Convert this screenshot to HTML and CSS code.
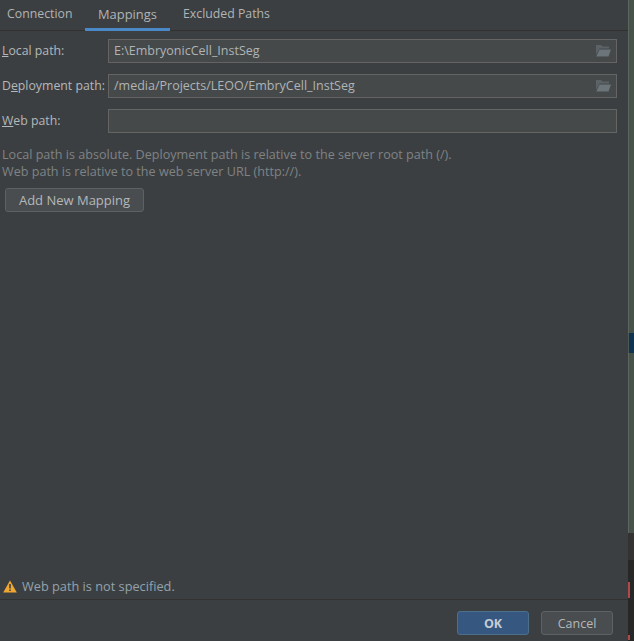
FILE: index.html
```html
<!DOCTYPE html>
<html lang="en">
<head>
<meta charset="utf-8">
<title>Mappings</title>
<link rel="stylesheet" href="styles.css">
</head>
<body>
<div class="shell">
  <div class="dialog">
    <nav class="tabs">
      <span class="tab">Connection</span>
      <span class="tab active">Mappings</span>
      <span class="tab">Excluded Paths</span>
    </nav>
    <main class="panel">
      <div class="form">
        <label class="label"><u>L</u>ocal path:</label>
        <div class="field"><span class="value">E:\EmbryonicCell_InstSeg</span>
          <svg class="folder" viewBox="0 0 15 12"><path d="M0 0h5l1.500 1.500H13v2H3.500L0 10z" fill="#5b6366"/><path d="M3.500 4.500H15l-2.500 7H0.300z" fill="#6b757a"/></svg>
        </div>
        <label class="label">D<u>e</u>ployment path:</label>
        <div class="field"><span class="value">/media/Projects/LEOO/EmbryCell_InstSeg</span>
          <svg class="folder" viewBox="0 0 15 12"><path d="M0 0h5l1.500 1.500H13v2H3.500L0 10z" fill="#5b6366"/><path d="M3.500 4.500H15l-2.500 7H0.300z" fill="#6b757a"/></svg>
        </div>
        <label class="label"><u>W</u>eb path:</label>
        <div class="field"></div>
      </div>
      <p class="hint">Local path is absolute. Deployment path is relative to the server root path (/).<br>Web path is relative to the web server URL (http://).</p>
      <button class="btn add">Add New Mapping</button>
    </main>
    <div class="status">
      <svg class="warn" viewBox="0 0 14 13"><path d="M7 0.500 L13.800 12.500 H0.200 Z" fill="#f0a732"/><path d="M6.200 4h1.600v4.500H6.200zM6.200 9.500h1.600v1.600H6.200z" fill="#3c3f41"/></svg>
      <span>Web path is not specified.</span>
    </div>
    <footer class="footer">
      <button class="btn ok">OK</button>
      <button class="btn cancel">Cancel</button>
    </footer>
  </div>
  <div class="edge">
    <div class="edge-a"></div>
    <div class="edge-b"></div>
    <div class="edge-c"></div>
    <div class="edge-d"></div>
    <div class="edge-e">
      <div class="mark mark-a"></div>
      <div class="mark mark-b"></div>
    </div>
  </div>
</div>
</body>
</html>
```
FILE: styles.css
```css
* { box-sizing: border-box; }
html, body { margin: 0; height: 100%; }
body { background: #3c3f41; font-family: "Open Sans", "Liberation Sans", sans-serif; font-size: 12.500px; color: #b4b8ba; overflow: hidden; }
.shell { display: flex; width: 634px; height: 641px; }
.dialog { width: 628px; display: flex; flex-direction: column; background: #3c3f41; }
.tabs { display: flex; height: 31px; border-bottom: 1px solid #323232; }
.tab { padding: 6px 13px 0; height: 31px; line-height: 16px; color: #b0b4b6; font-size: 12.300px; }
.tab:first-child { padding: 6px 13px 0 7px; width: 85px; }
.tab.active { border-bottom: 3px solid #4a88c7; width: 85px; font-size: 12.900px; }
.panel { flex: 1; padding: 8px 11px 0 2px; display: flex; flex-direction: column; align-items: flex-start; }
.form { display: grid; grid-template-columns: 106px 1fr; row-gap: 11px; width: 100%; }
.label { align-self: center; line-height: 16px; white-space: nowrap; color: #b4b8ba; font-size: 12.300px; }
.field { height: 24px; background: #45494a; border: 1px solid #646464; display: flex; align-items: center; justify-content: space-between; padding: 0 5px; color: #b0b4b6; }
.value { padding-bottom: 2px; }
.folder { width: 15px; height: 12px; }
.hint { margin: 13px 0 0; line-height: 17px; color: #7f8386; font-size: 12.600px; }
.btn { font: inherit; height: 24px; border-radius: 3px; border: 1px solid #5e6162; background: #4a4d4f; color: #b4b8ba; padding: 0; }
.add { width: 139px; margin: 8px 0 0 3px; font-size: 13px; }
.status { height: 23px; display: flex; align-items: center; gap: 5px; padding: 0 0 3px 3px; color: #93a3ad; font-size: 12.750px; }
.warn { width: 14px; height: 13px; }
.footer { height: 42px; border-top: 1px solid #323232; display: flex; justify-content: flex-end; gap: 12px; padding: 11px 15px 0 0; }
.ok { width: 72px; background: #365880; border-color: #4c708c; color: #c4ccd4; font-weight: 700; }
.cancel { width: 72px; }
.edge { width: 6px; display: flex; flex-direction: column; background: #47524a; }
.edge-a { height: 333px; border-left: 1px solid #5c655e; }
.edge-b { height: 20px; background: #0f3350; border-left: 1px solid #4a5a55; }
.edge-c { height: 180px; border-left: 1px solid #5c655e; }
.edge-d { height: 27px; background: #333333; }
.edge-e { flex: 1; background: #272727; padding-top: 22px; }
.mark { background: #b04a4a; }
.mark-a { width: 2px; height: 16px; }
.mark-b { width: 2px; height: 5px; margin-top: 37px; }
```
